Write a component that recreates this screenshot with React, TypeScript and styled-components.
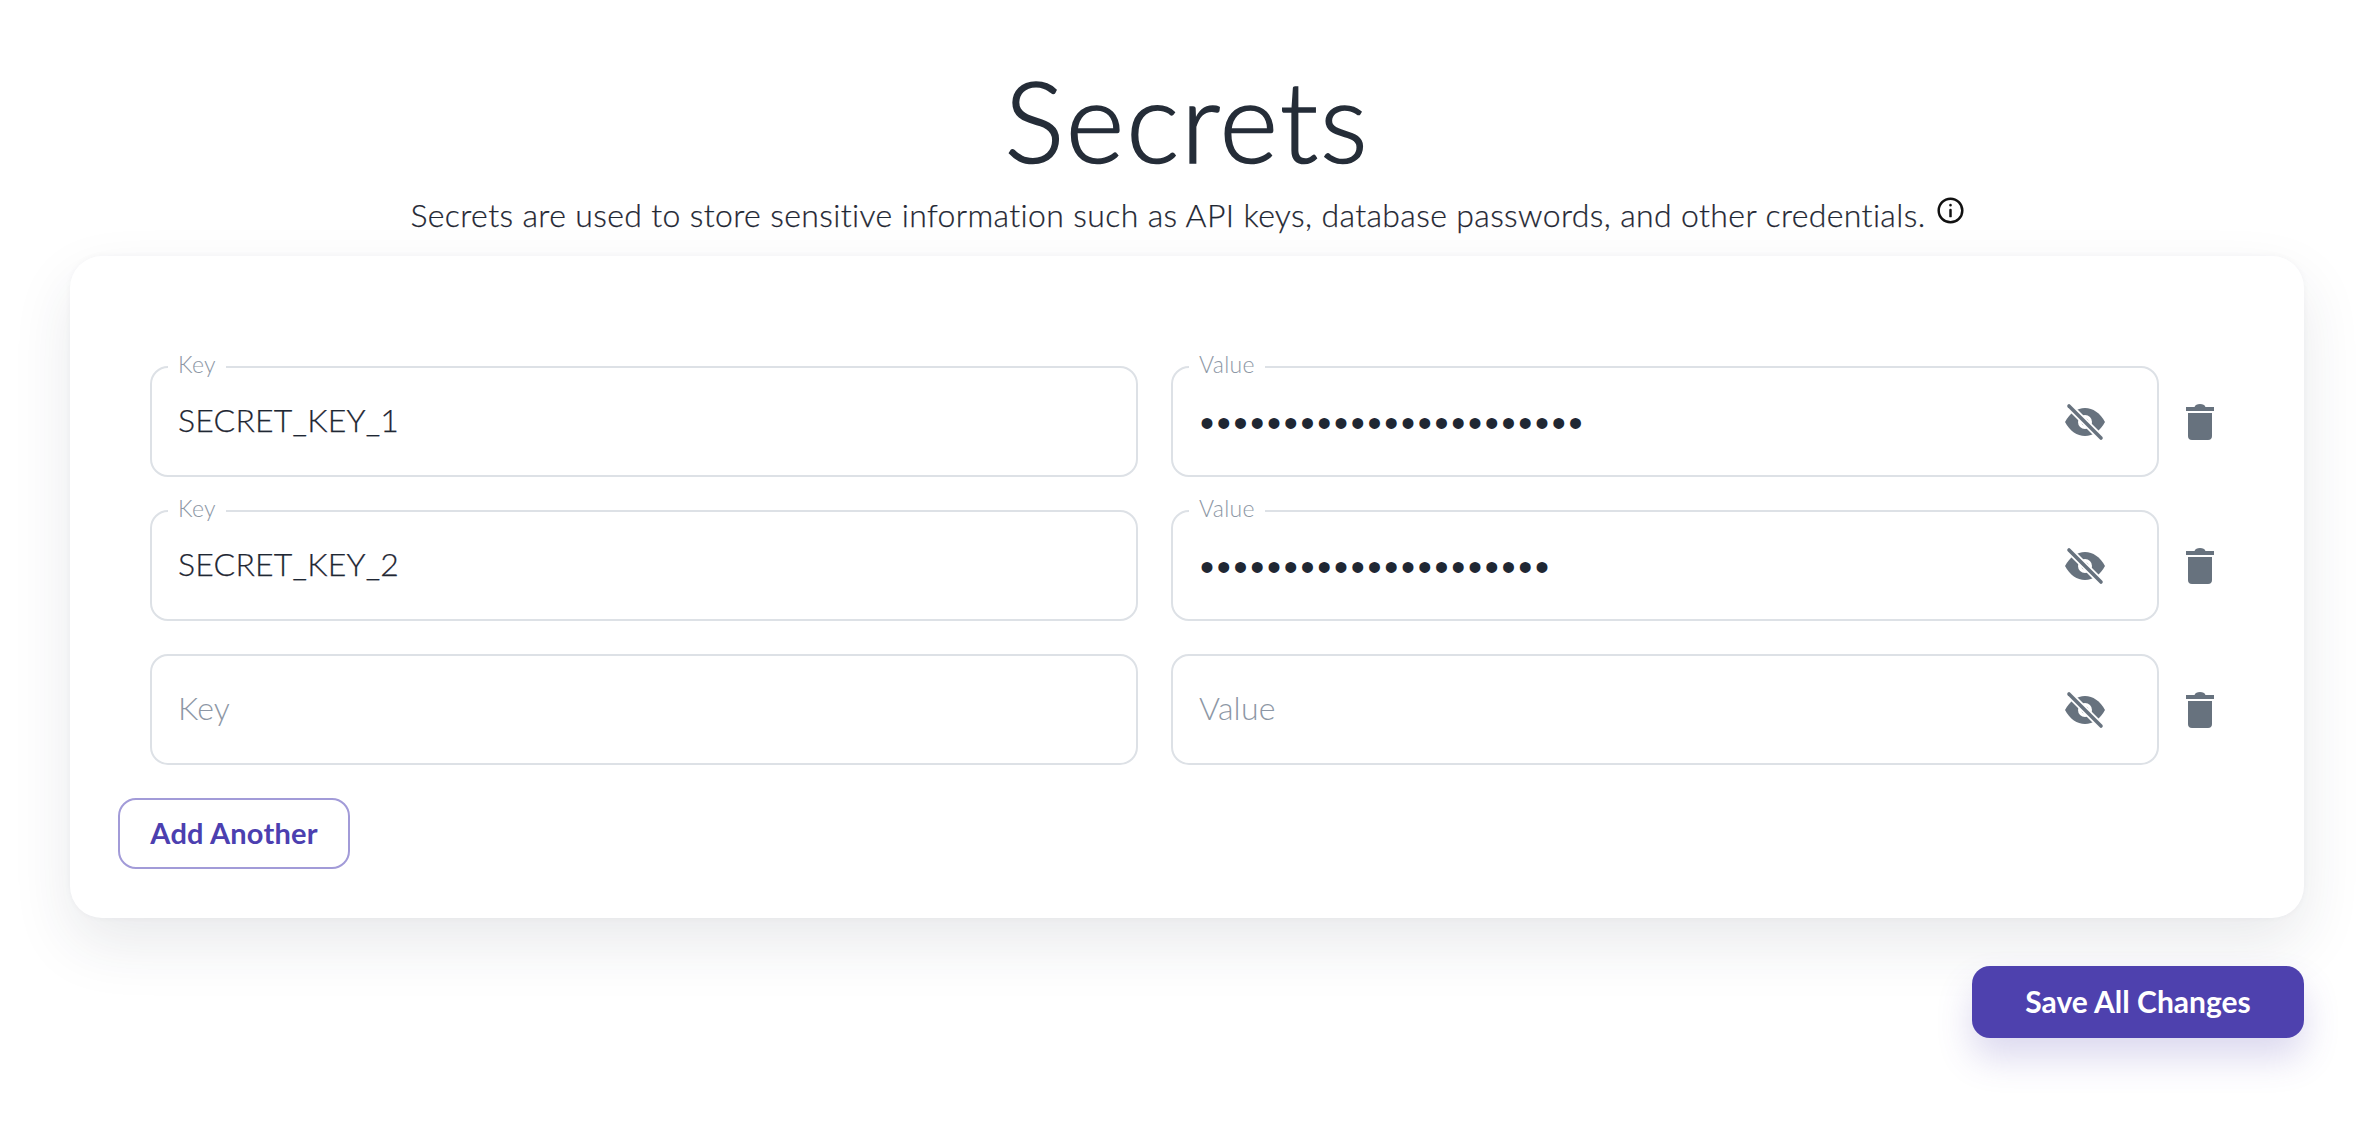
import React from "react";
import styled, { createGlobalStyle } from "styled-components";

const Global = createGlobalStyle`
  html, body { margin: 0; padding: 0; background: #fff; }
  body { font-family: "Lato", "Noto Sans", sans-serif; color: #252d38; }
  * { box-sizing: border-box; }
`;

const Page = styled.main`
  width: 2380px;
  height: 1124px;
  padding: 56px 76px 0 70px;
  overflow: hidden;
`;
const Header = styled.header`
  height: 200px;
  display: flex;
  flex-direction: column;
  align-items: center;
`;
const Title = styled.h1`
  margin: 0;
  font-family: "Lato", sans-serif;
  font-weight: 300;
  font-size: 112px;
  line-height: 128px;
  letter-spacing: 2px;
  color: #252d38;
  -webkit-text-stroke: 1.6px #252d38;
`;
const Subtitle = styled.p`
  margin: 11px 0 0;
  font-size: 32px;
  font-weight: 300;
  line-height: 40px;
  letter-spacing: 0.37px;
  color: #1f2733;
  -webkit-text-stroke: 0.25px #1f2733;
  display: flex;
  align-items: flex-start;
  gap: 11px;
`;
const Info = styled.svg`
  width: 27px;
  height: 27px;
  margin-top: 2px;
`;
const Card = styled.section`
  width: 2234px;
  height: 662px;
  background: #fff;
  border-radius: 32px;
  padding: 98px 48px 0;
  box-shadow: 0 26px 60px rgba(40, 50, 70, 0.1), 0 0 6px rgba(40, 50, 70, 0.04);
`;
const Rows = styled.div`
  display: flex;
  flex-direction: column;
  padding-left: 32px;
  gap: 21px;
`;
const Row = styled.div`
  display: grid;
  grid-template-columns: 988px 988px 1fr;
  column-gap: 33px;
`;
const Field = styled.fieldset`
  margin: 0;
  padding: 0 26px;
  min-width: 0;
  height: 123px;
  border: 2px solid #dde1e6;
  border-radius: 18px;
  display: flex;
  align-items: center;
`;
const Legend = styled.legend<{ $empty?: boolean }>`
  height: 26px;
  padding: 0;
  margin-left: ${(p) => (p.$empty ? "0" : "-10px")};
  font-size: 23px;
  font-weight: 300;
  line-height: 21px;
  letter-spacing: 0.3px;
  color: #8d97a5;
`;
const LegendLabel = styled.span`
  padding: 0 10px;
`;
const Input = styled.input<{ $secret?: boolean }>`
  flex: 1;
  min-width: 0;
  height: 60px;
  margin-top: ${(p) => (p.$secret ? "-8px" : "-16px")};
  padding: 0 0 0 ${(p) => (p.$secret ? "1px" : "0")};
  border: 0;
  outline: 0;
  background: transparent;
  font-family: ${(p) => (p.$secret ? '"Liberation Sans"' : '"Lato"')}, sans-serif;
  font-size: ${(p) => (p.$secret ? "40px" : "32px")};
  font-weight: ${(p) => (p.$secret ? 400 : 300)};
  color: #1f2733;
  letter-spacing: ${(p) => (p.$secret ? "2.75px" : "0.2px")};
  -webkit-text-stroke: ${(p) => (p.$secret ? "0" : "0.25px")};
  &::placeholder { color: #8d97a5; opacity: 1; -webkit-text-stroke: 0; }
`;
const IconButton = styled.button`
  border: 0;
  background: transparent;
  padding: 0;
  display: flex;
  align-items: center;
  justify-content: center;
  color: #67727e;
`;
const EyeButton = styled(IconButton)`
  width: 44px;
  height: 44px;
  margin: -12px 24px 0 0;
`;
const TrashButton = styled(IconButton)`
  width: 60px;
  height: 44px;
  margin: 12px 0 0 -22px;
  align-self: center;
`;
const AddButton = styled.button`
  display: block;
  width: 232px;
  height: 71px;
  margin-top: 33px;
  padding: 0 0 2px;
  background: #fff;
  border: 2px solid #a29bd8;
  border-radius: 18px;
  font-family: "Lato", sans-serif;
  font-size: 29px;
  font-weight: 700;
  letter-spacing: 0.2px;
  color: #4c3fb0;
`;
const Footer = styled.footer`
  display: flex;
  justify-content: flex-end;
  padding-top: 48px;
`;
const SaveButton = styled.button`
  width: 332px;
  height: 72px;
  padding: 0 0 2px;
  background: #4e41ae;
  border: 0;
  border-radius: 18px;
  color: #fff;
  font-family: "Lato", sans-serif;
  font-size: 30px;
  font-weight: 700;
  box-shadow: 0 20px 36px rgba(78, 65, 174, 0.2);
`;

const EyeOff = () => (
  <svg width="44" height="44" viewBox="0 0 44 44" aria-hidden="true">
    <path d="M2 22 C7 13 14 8 22 8 C30 8 37 13 42 22 C37 31 30 36 22 36 C14 36 7 31 2 22 Z" fill="currentColor" />
    <circle cx="22" cy="22" r="7" fill="#fff" />
    <circle cx="22" cy="22" r="3.5" fill="currentColor" />
    <path d="M5 5 L39 39" stroke="#fff" strokeWidth="7" />
    <path d="M6 6 L38 38" stroke="currentColor" strokeWidth="3.6" strokeLinecap="round" />
  </svg>
);
const Trash = () => (
  <svg width="28" height="38" viewBox="0 0 28 38" aria-hidden="true" fill="currentColor">
    <path d="M0 4 H8.5 C9.5 1.8 11 1 14 1 C17 1 18.5 1.8 19.5 4 H28 V8 H0 Z" />
    <path d="M2 10 H26 V33 C26 35.6 24.6 37 22 37 H6 C3.4 37 2 35.6 2 33 Z" />
  </svg>
);

const rows = [
  { key: "SECRET_KEY_1", value: "•".repeat(23) },
  { key: "SECRET_KEY_2", value: "•".repeat(21) },
  { key: "", value: "" },
];

export default function App() {
  return (
    <Page>
      <Global />
      <Header>
        <Title>Secrets</Title>
        <Subtitle>
          Secrets are used to store sensitive information such as API keys, database passwords, and other credentials.
          <Info viewBox="0 0 24 24" fill="none" stroke="#111" strokeWidth="2.2" strokeLinecap="round">
            <circle cx="12" cy="12" r="10.5" />
            <path d="M12 11.5V17" />
            <path d="M12 7.2V7.4" />
          </Info>
        </Subtitle>
      </Header>
      <Card>
        <Rows>
          {rows.map((r, i) => (
            <Row key={i}>
              <Field>
                <Legend $empty={!r.key}>{r.key && <LegendLabel>Key</LegendLabel>}</Legend>
                <Input readOnly value={r.key} placeholder="Key" />
              </Field>
              <Field>
                <Legend $empty={!r.value}>{r.value && <LegendLabel>Value</LegendLabel>}</Legend>
                <Input readOnly value={r.value} placeholder="Value" $secret={!!r.value} />
                <EyeButton aria-label="Show value"><EyeOff /></EyeButton>
              </Field>
              <TrashButton aria-label="Delete secret"><Trash /></TrashButton>
            </Row>
          ))}
        </Rows>
        <AddButton>Add Another</AddButton>
      </Card>
      <Footer>
        <SaveButton>Save All Changes</SaveButton>
      </Footer>
    </Page>
  );
}
